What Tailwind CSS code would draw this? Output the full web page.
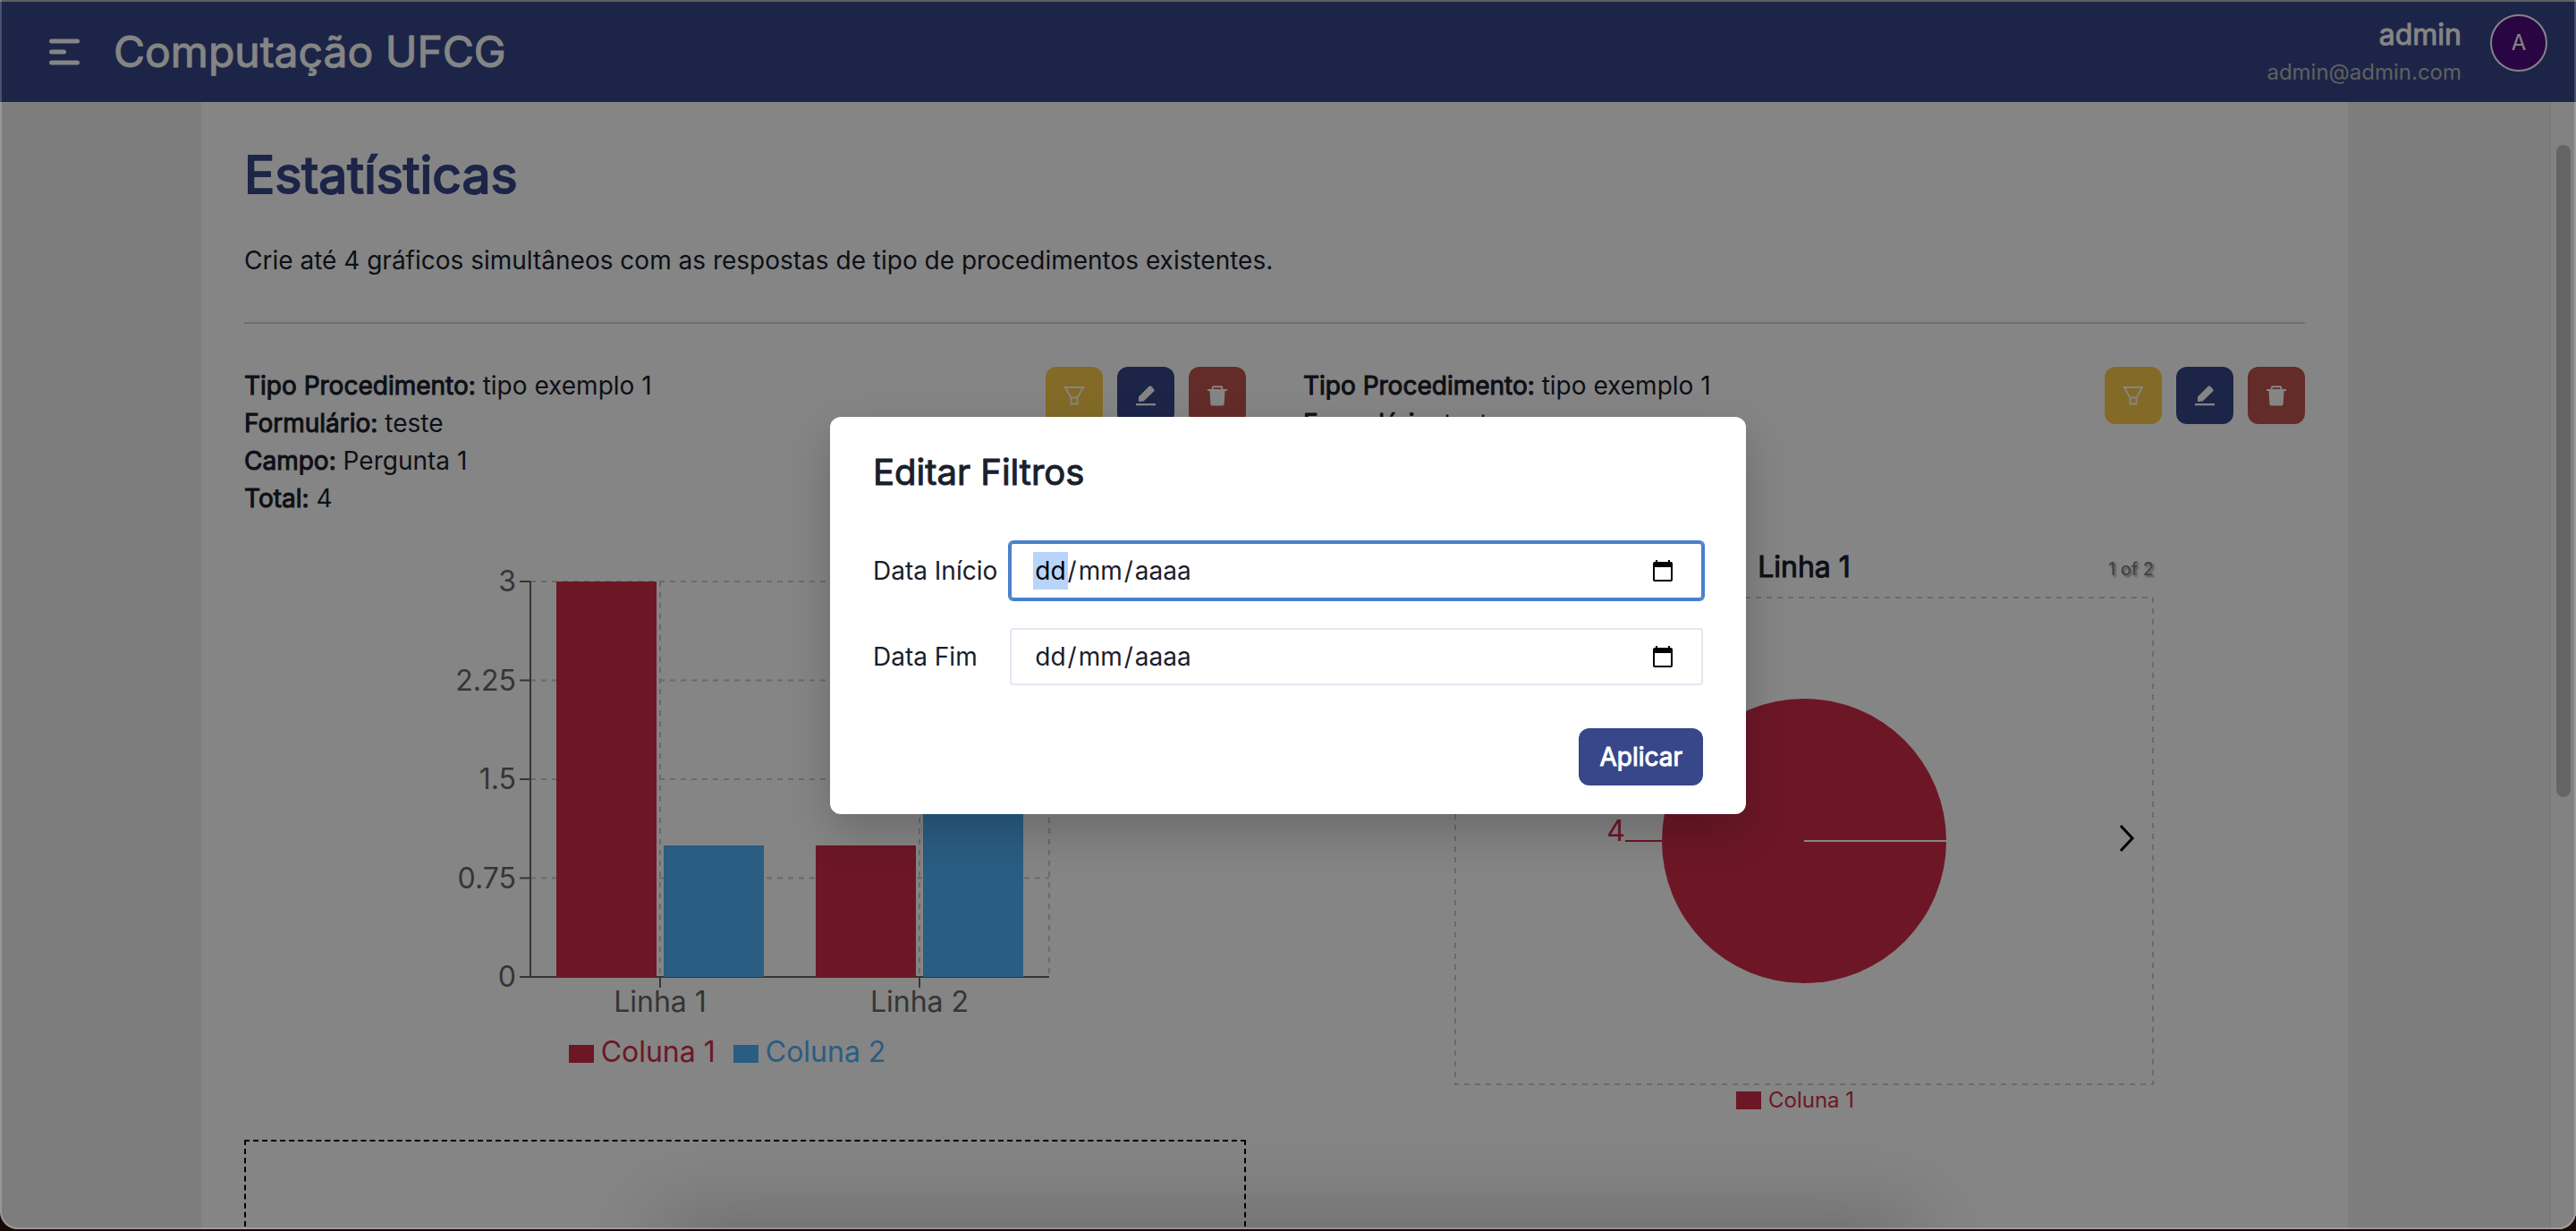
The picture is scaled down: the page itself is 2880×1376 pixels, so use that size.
<!DOCTYPE html>
<html lang="pt-BR">
<head>
<meta charset="utf-8">
<title>Computação UFCG - Estatísticas</title>
<script src="https://cdn.jsdelivr.net/npm/@tailwindcss/browser@4"></script>
</head>
<body class="bg-[#180808] font-['Inter',sans-serif] text-[28px] leading-[42px] text-[#1a202c]">
<div class="relative flex h-[calc(100vh-2px)] flex-col overflow-hidden rounded-b-[20px] bg-[#f0f0f0]">
  <header class="flex h-[114px] shrink-0 items-center justify-between border-t-2 border-[#b8b8b8] bg-[#37478a] pr-8 pl-[55px] text-white">
    <div class="flex items-center gap-[38px]">
      <button type="button" aria-label="Menu">
        <svg class="h-8 w-[34px]" viewBox="0 0 34 32" fill="none" stroke="currentColor" stroke-width="5" stroke-linecap="round"><path d="M2.500 4H31.500M2.500 16H16.500M2.500 28H31.500"/></svg>
      </button>
      <a href="#" class="text-[48px] leading-[60px] font-normal [-webkit-text-stroke:1px]">Computação UFCG</a>
    </div>
    <div class="flex items-start gap-8">
      <div class="pt-1 text-right">
        <p class="text-[32px] leading-[42px] [-webkit-text-stroke:1px]">admin</p>
        <p class="text-[24px] leading-[42px] text-[#b8b8b8]">admin@admin.com</p>
      </div>
      <button type="button" class="mt-0.5 size-16 rounded-full border-2 border-white bg-[#4f0b80] text-[24px] leading-[60px]">A</button>
    </div>
  </header>

  <div class="flex min-h-0 flex-1">
    <main class="flex flex-1 justify-center overflow-hidden">
      <div class="h-max w-[2400px] bg-white px-12 pt-[46px] pb-20">
        <h1 class="text-[57px] leading-[72px] font-normal text-[#37478a] [-webkit-text-stroke:2px]">Estatísticas</h1>
        <p class="mt-[38px]">Crie até 4 gráficos simultâneos com as respostas de tipo de procedimentos existentes.</p>
        <hr class="mt-12 border-t-2 border-[#d3d3d3]">

        <div class="mt-12 grid grid-cols-2 gap-x-16">
          <section class="h-[864px]">
            <div class="flex items-start justify-between">
              <div>
                <p><b class="font-normal [-webkit-text-stroke:1px]">Tipo Procedimento:</b> tipo exemplo 1</p>
                <p><b class="font-normal [-webkit-text-stroke:1px]">Formulário:</b> teste</p>
                <p><b class="font-normal [-webkit-text-stroke:1px]">Campo:</b> Pergunta 1</p>
                <p><b class="font-normal [-webkit-text-stroke:1px]">Total:</b> 4</p>
              </div>
              <div class="flex gap-4 text-white">
                <button type="button" aria-label="Filtrar" class="grid size-16 place-items-center rounded-xl bg-[#fcce4b]"><svg class="size-6" viewBox="0 0 24 24" fill="none" stroke="currentColor" stroke-width="1.800"><path d="M1.800 3H22.200L15.500 14.500H8.500ZM8.500 14.500V21.500H15.500V14.500"/></svg></button>
                <button type="button" aria-label="Editar" class="grid size-16 place-items-center rounded-xl bg-[#37478a]"><svg class="size-6" viewBox="0 0 24 24" fill="currentColor"><path d="M1 21H23V23.200H1ZM4 19V13.500L16 1.500L18 1.500L21.500 5.500V7L9.500 18.500Z"/></svg></button>
                <button type="button" aria-label="Excluir" class="grid size-16 place-items-center rounded-xl bg-[#c0554d]"><svg class="size-6" viewBox="0 0 24 24" fill="currentColor"><path d="M3.500 6.500H20.500L19.700 21.500Q19.600 23.500 17.600 23.500H6.400Q4.400 23.500 4.300 21.500ZM1 5H23V7H1Z"/><path d="M6.700 6V3.200Q6.700 2.200 7.700 2.200H16.300Q17.300 2.200 17.300 3.200V6" fill="none" stroke="currentColor" stroke-width="2"/></svg></button>
              </div>
            </div>
            <figure class="mx-auto mt-[52px] w-[760px]">
              <svg class="block h-[514px] w-[760px]" viewBox="0 0 760 514" font-size="32">
                <g stroke="#ccc" stroke-width="2" stroke-dasharray="6 6">
                  <path d="M140 20H720M140 130.500H720M140 241H720M140 351.500H720M285 20V462M575 20V462M720 20V462"/>
                </g>
                <path fill="none" stroke="#666" stroke-width="2" d="M140 20V462M140 462H720M128 20H140M128 130.500H140M128 241H140M128 351.500H140M128 462H140M285 462V474M575 462V474"/>
                <path fill="#d22c49" d="M169 20H281V462H169ZM459 315H571V462H459Z"/>
                <path fill="#51b3fa" d="M289 315H401V462H289ZM579 20H691V462H579Z"/>
                <g fill="#666" text-anchor="end"><text x="124" y="31">3</text><text x="124" y="142">2.25</text><text x="124" y="252">1.5</text><text x="124" y="363">0.75</text><text x="124" y="473">0</text></g>
                <g fill="#666" text-anchor="middle"><text x="285" y="501">Linha 1</text><text x="575" y="501">Linha 2</text></g>
              </svg>
              <figcaption>
                <ul class="mt-2 flex justify-center gap-5 pr-10 text-[32px] leading-12">
                  <li class="flex items-center gap-2 text-[#d22c49]"><span class="mt-1 h-5 w-7 bg-current"></span>Coluna 1</li>
                  <li class="flex items-center gap-2 text-[#51b3fa]"><span class="mt-1 h-5 w-7 bg-current"></span>Coluna 2</li>
                </ul>
              </figcaption>
            </figure>
          </section>

          <section class="h-[864px]">
            <div class="flex items-start justify-between">
              <div>
                <p><b class="font-normal [-webkit-text-stroke:1px]">Tipo Procedimento:</b> tipo exemplo 1</p>
                <p><b class="font-normal [-webkit-text-stroke:1px]">Formulário:</b> teste</p>
                <p><b class="font-normal [-webkit-text-stroke:1px]">Campo:</b> Pergunta 1</p>
                <p><b class="font-normal [-webkit-text-stroke:1px]">Total:</b> 4</p>
              </div>
              <div class="flex gap-4 text-white">
                <button type="button" aria-label="Filtrar" class="grid size-16 place-items-center rounded-xl bg-[#fcce4b]"><svg class="size-6" viewBox="0 0 24 24" fill="none" stroke="currentColor" stroke-width="1.800"><path d="M1.800 3H22.200L15.500 14.500H8.500ZM8.500 14.500V21.500H15.500V14.500"/></svg></button>
                <button type="button" aria-label="Editar" class="grid size-16 place-items-center rounded-xl bg-[#37478a]"><svg class="size-6" viewBox="0 0 24 24" fill="currentColor"><path d="M1 21H23V23.200H1ZM4 19V13.500L16 1.500L18 1.500L21.500 5.500V7L9.500 18.500Z"/></svg></button>
                <button type="button" aria-label="Excluir" class="grid size-16 place-items-center rounded-xl bg-[#c0554d]"><svg class="size-6" viewBox="0 0 24 24" fill="currentColor"><path d="M3.500 6.500H20.500L19.700 21.500Q19.600 23.500 17.600 23.500H6.400Q4.400 23.500 4.300 21.500ZM1 5H23V7H1Z"/><path d="M6.700 6V3.200Q6.700 2.200 7.700 2.200H16.300Q17.300 2.200 17.300 3.200V6" fill="none" stroke="currentColor" stroke-width="2"/></svg></button>
              </div>
            </div>
            <figure class="mx-auto mt-8 w-[782px]">
              <div class="grid grid-cols-3 items-center">
                <h2 class="col-start-2 text-center text-[32px] leading-12 font-normal [-webkit-text-stroke:1px]">Linha 1</h2>
                <span class="pt-1 text-right text-[20px] text-[#777] text-shadow-[2px_2px_2px_rgba(0,0,0,0.4)]">1 of 2</span>
              </div>
              <div class="relative mt-2">
                <svg class="block h-[548px] w-[782px]" viewBox="0 0 782 548" font-size="32">
                  <rect x="1" y="2" width="780" height="544" fill="none" stroke="#ccc" stroke-width="2" stroke-dasharray="6 6"/>
                  <circle cx="391" cy="274" r="159" fill="#d22c49"/>
                  <path d="M391 274H550" stroke="#fff" stroke-width="2"/>
                  <path d="M191 274H232" stroke="#d22c49" stroke-width="2"/>
                  <text x="191" y="274" text-anchor="end" fill="#d22c49">4</text>
                </svg>
                <button type="button" aria-label="Próximo" class="absolute top-64 right-5 text-black"><svg class="h-[30px] w-5" viewBox="0 0 20 30" fill="none" stroke="currentColor" stroke-width="3"><path d="M3 1L16 15L3 29"/></svg></button>
              </div>
              <figcaption class="flex items-center justify-center gap-2 pr-5 text-[24px] leading-8 text-[#d22c49]"><span class="h-5 w-7 bg-current"></span>Coluna 1</figcaption>
            </figure>
          </section>

          <section class="h-[400px] border-2 border-dashed border-black"></section>
        </div>
      </div>
    </main>
    <div class="w-[30px] border-l-2 border-[#e6e6e6] bg-[#fafafa] pt-12">
      <div class="ml-1.5 h-[729px] w-4 rounded-full bg-[#c1c1c1]"></div>
    </div>
  </div>

  <div class="absolute inset-0 bg-black/48"></div>
  <div class="pointer-events-none absolute inset-x-[26%] -bottom-10 h-10 shadow-[0_0_90px_10px_rgba(0,0,0,0.25)]"></div>
  <div class="pointer-events-none absolute inset-0 rounded-b-[20px] border-x-2 border-b-2 border-white/20"></div>

  <div class="absolute inset-0 flex items-start justify-center pt-[466px]">
    <form role="dialog" aria-labelledby="dialog-title" class="w-[1024px] rounded-xl bg-white px-12 py-8 shadow-[0_20px_50px_rgba(0,0,0,0.2)]">
      <h2 id="dialog-title" class="text-[40px] leading-[60px] font-normal [-webkit-text-stroke:1px]">Editar Filtros</h2>
      <div class="mt-12 grid grid-cols-[auto_1fr] items-center gap-x-3.5 gap-y-8">
        <label for="start-day">Data Início</label>
        <div class="flex h-16 items-center justify-between rounded-sm border-2 border-[#4781cb] pr-8 pl-6 ring-2 ring-[#4781cb]">
          <div class="flex">
            <input id="start-day" value="dd" class="field-sizing-content bg-[#b9d4fb] px-[2px] leading-[38px] text-black outline-none"><span>/</span><input aria-label="Mês inicial" value="mm" class="field-sizing-content px-[2px] outline-none"><span>/</span><input aria-label="Ano inicial" value="aaaa" class="field-sizing-content px-[2px] outline-none">
          </div>
          <button type="button" aria-label="Abrir calendário"><svg class="h-6 w-[22px]" viewBox="0 0 22 24"><path fill="#000" fill-rule="evenodd" d="M3 0H5V2H17V0H19V2H20Q22 2 22 4V22Q22 24 20 24H2Q0 24 0 22V4Q0 2 2 2H3ZM2 8V22H20V8Z"/></svg></button>
        </div>
        <label for="end-day">Data Fim</label>
        <div class="flex h-16 items-center justify-between rounded-sm border-2 border-[#e2e8f0] pr-8 pl-6">
          <div class="flex">
            <input id="end-day" value="dd" class="field-sizing-content px-[2px] outline-none"><span>/</span><input aria-label="Mês final" value="mm" class="field-sizing-content px-[2px] outline-none"><span>/</span><input aria-label="Ano final" value="aaaa" class="field-sizing-content px-[2px] outline-none">
          </div>
          <button type="button" aria-label="Abrir calendário"><svg class="h-6 w-[22px]" viewBox="0 0 22 24"><path fill="#000" fill-rule="evenodd" d="M3 0H5V2H17V0H19V2H20Q22 2 22 4V22Q22 24 20 24H2Q0 24 0 22V4Q0 2 2 2H3ZM2 8V22H20V8Z"/></svg></button>
        </div>
      </div>
      <div class="mt-12 flex justify-end">
        <button type="button" class="h-16 rounded-xl bg-[#37478a] px-[23px] font-normal text-white [-webkit-text-stroke:1px]">Aplicar</button>
      </div>
    </form>
  </div>
</div>
</body>
</html>
